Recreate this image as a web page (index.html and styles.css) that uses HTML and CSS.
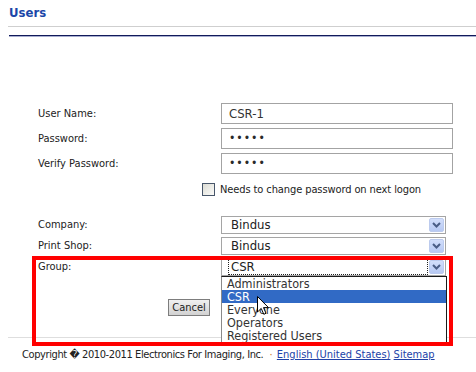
FILE: index.html
```html
<!DOCTYPE html>
<html>
<head>
<meta charset="utf-8">
<link rel="stylesheet" href="styles.css">
</head>
<body>
<div class="page">
  <div class="head"><h1 class="title">Users</h1></div>
  <div class="rule-navy"></div>

  <form class="form">
    <div class="row text-row"><label class="lbl">User Name:</label><div class="field">CSR-1</div></div>
    <div class="row text-row"><label class="lbl">Password:</label><div class="field dots">•••••</div></div>
    <div class="row text-row"><label class="lbl">Verify Password:</label><div class="field dots">•••••</div></div>
    <div class="check-row"><span class="box"></span><span class="check-lbl">Needs to change password on next logon</span></div>

    <div class="row sel-row first"><label class="lbl">Company:</label>
      <div class="select"><span class="val">Bindus</span><span class="arrow"><svg width="9" height="6" viewBox="0 0 9 6"><path d="M1 1 L4.5 4.5 L8 1" fill="none" stroke="#4a5d86" stroke-width="2"/></svg></span></div>
    </div>
    <div class="row sel-row"><label class="lbl">Print Shop:</label>
      <div class="select"><span class="val">Bindus</span><span class="arrow"><svg width="9" height="6" viewBox="0 0 9 6"><path d="M1 1 L4.5 4.5 L8 1" fill="none" stroke="#4a5d86" stroke-width="2"/></svg></span></div>
    </div>
    <div class="row sel-row"><label class="lbl">Group:</label>
      <div class="select open"><span class="val focus">CSR</span><span class="arrow"><svg width="9" height="6" viewBox="0 0 9 6"><path d="M1 1 L4.5 4.5 L8 1" fill="none" stroke="#4a5d86" stroke-width="2"/></svg></span>
        <ul class="list">
          <li>Administrators</li>
          <li class="hl">CSR</li>
          <li>Everyone</li>
          <li>Operators</li>
          <li>Registered Users</li>
        </ul>
      </div>
    </div>
    <div class="row btn-row"><button type="button" class="btn">Cancel</button></div>
  </form>

  <footer class="foot">
    <span class="copy">Copyright &#xFFFD; 2010-2011 Electronics For Imaging, Inc.</span>
    <span class="sep">·</span>
    <a class="link" href="#">English (United States)</a>
    <a class="link" href="#">Sitemap</a>
  </footer>

  <div class="annot"></div>
  <svg class="cursor" width="13" height="20" viewBox="0 0 13 20"><path d="M0.5 0.5 L0.5 16 L4.2 12.4 L6.8 18.3 L9 17.3 L6.5 11.6 L11.5 11.6 Z" fill="#fff" stroke="#000" stroke-width="1"/></svg>
</div>
</body>
</html>
```

FILE: styles.css
```css
html, body {
  margin: 0;
  padding: 0;
  background: #fff;
}

body {
  font-family: "DejaVu Sans", "Liberation Sans", sans-serif;
  font-stretch: condensed;
  font-size: 11px;
  color: #222;
}

.page {
  position: relative;
  width: 476px;
  height: 372px;
  padding-left: 8px;
  box-sizing: border-box;
  overflow: hidden;
}

.head {
  padding-top: 5px;
  padding-bottom: 5px;
  border-bottom: 1px solid #cfcfcf;
}

.title {
  margin: 0 0 0 1px;
  font-size: 13px;
  line-height: 16px;
  font-weight: bold;
  color: #1b46a8;
}

.rule-navy {
  margin-top: 8px;
  margin-left: 1px;
  height: 1px;
  background: #111a5a;
  border-bottom: 1px solid #a8aed0;
}

.form {
  margin: 66px 0 0 30px;
}

.row {
  display: grid;
  grid-template-columns: 183px auto;
  align-items: center;
}

.text-row {
  height: 21px;
  margin-bottom: 4px;
}

.lbl {
  line-height: 14px;
}

.field {
  width: 232px;
  height: 21px;
  box-sizing: border-box;
  border: 1px solid #a3a3a3;
  padding-left: 7px;
  font-size: 13px;
  line-height: 19px;
  color: #333;
}

.dots {
  font-size: 12px;
  letter-spacing: 1px;
  color: #2a2a2a;
}

.check-row {
  display: flex;
  align-items: center;
  margin-top: 9px;
  padding-left: 164px;
  height: 13px;
}

.box {
  width: 13px;
  height: 13px;
  box-sizing: border-box;
  border: 1px solid #48566a;
  background: linear-gradient(135deg, #dcdcd4, #fbfbf9);
  margin-right: 5px;
}

.check-lbl {
  line-height: 14px;
  letter-spacing: -0.1px;
}

.sel-row {
  height: 18px;
  margin-top: 3px;
}

.sel-row.first {
  margin-top: 20px;
}

.select {
  position: relative;
  width: 225px;
  height: 18px;
  box-sizing: border-box;
  border: 1px solid #a5a5a5;
  display: flex;
  align-items: center;
}

.val {
  flex: 1;
  margin-left: 6px;
  margin-right: 1px;
  height: 16px;
  box-sizing: border-box;
  border: 1px dotted transparent;
  padding-left: 2px;
  font-size: 13px;
  line-height: 14px;
  color: #222;
}

.val.focus {
  border-color: #222;
}

.arrow {
  width: 15px;
  height: 14px;
  margin-right: 1px;
  box-sizing: border-box;
  border: 1px solid #bccbee;
  border-radius: 2px;
  background: linear-gradient(#d2defb, #b7c9f3);
  display: flex;
  align-items: center;
  justify-content: center;
}

.list {
  position: absolute;
  left: -1px;
  top: 17px;
  width: 226px;
  margin: 0;
  padding: 0;
  list-style: none;
  box-sizing: border-box;
  border: 1px solid #1a1a1a;
  border-left-color: #8a8a8a;
  background: #fff;
  z-index: 2;
}

.list li {
  height: 13px;
  line-height: 13px;
  padding-left: 5px;
  font-size: 12.5px;
  color: #333;
}

.list li.hl {
  background: #316ac5;
  color: #fff;
}

.btn-row {
  margin-top: 23px;
  height: 17px;
}

.btn {
  justify-self: end;
  margin-right: 11px;
  width: 42px;
  height: 17px;
  padding: 0;
  box-sizing: border-box;
  border: 1px solid #7d7d7d;
  background: linear-gradient(#f0f0f0, #d2d2d2);
  font-family: inherit;
  font-stretch: condensed;
  font-size: 11px;
  line-height: 14px;
  color: #222;
}

.foot {
  margin-top: 21px;
  border-top: 1px solid #dedede;
  padding: 10px 0 0 14px;
  line-height: 14px;
  white-space: nowrap;
}

.copy {
  letter-spacing: -0.4px;
}

.sep {
  color: #d07020;
  margin: 0 1px 0 3px;
}

.link {
  color: #2142a8;
  text-decoration: underline;
}

.annot {
  position: absolute;
  left: 32px;
  top: 256px;
  width: 421px;
  height: 90px;
  box-sizing: border-box;
  border: 4px solid #ff0000;
  z-index: 3;
}

.cursor {
  position: absolute;
  left: 257px;
  top: 296px;
  z-index: 4;
}
```
